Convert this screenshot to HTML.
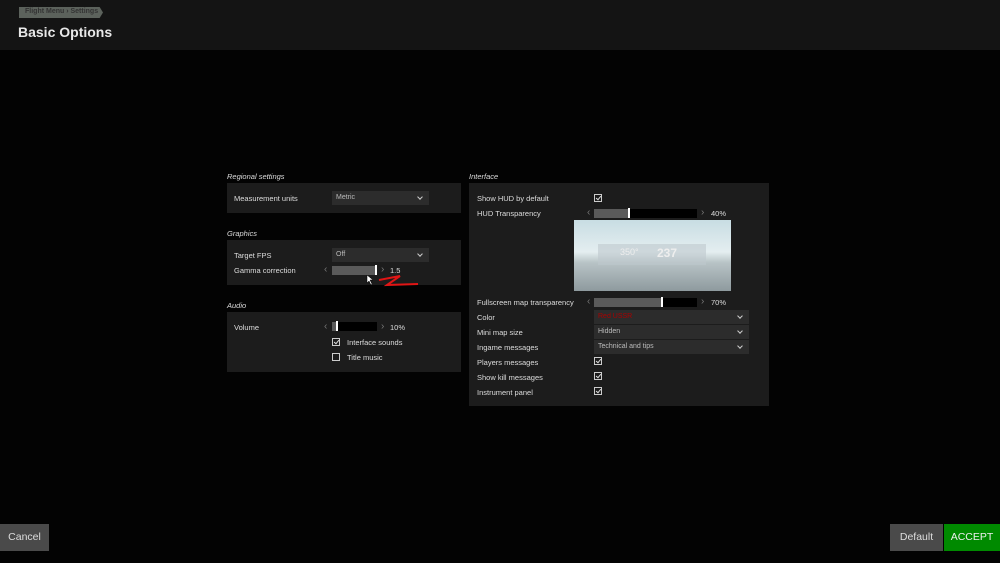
<!DOCTYPE html>
<html><head><style>
*{margin:0;padding:0;box-sizing:border-box}
body{width:1000px;height:563px;background:#030303;font-family:"Liberation Sans",sans-serif;color:#ddd;position:relative;overflow:hidden;font-size:7.5px}
.a{position:absolute}
.hdr{left:0;top:0;width:1000px;height:50px;background:#141414}
.lbl{font-style:italic;font-size:7.5px;color:#ddd}
.pan{background:#1c1c1c}
.t{font-size:7.5px;color:#ddd}
.dd{background:#2c2c2c;height:14px;padding:3px 0 0 4px;font-size:7px;color:#bbb;line-height:8px}
.dd:after{content:"";position:absolute;right:7px;top:4px;width:3px;height:3px;border-right:1px solid #ccc;border-bottom:1px solid #ccc;transform:rotate(45deg)}
.cb{width:8px;height:8px;border:1px solid #ccc}
.cb.c:after{content:"";position:absolute;left:2px;top:0px;width:2px;height:4px;border-right:1px solid #ddd;border-bottom:1px solid #ddd;transform:rotate(40deg)}
.sl{height:9px;background:#000}
.sf{height:9px;background:#5a5a5a}
.kn{width:2px;height:10px;background:#fff}
.ar{color:#777;font-size:10px;line-height:10px}
.btn{height:27px;line-height:27px;text-align:center;font-size:10.5px;color:#ddd}
</style></head><body>
<div class="a hdr"></div>
<div class="a" style="left:19px;top:7px;width:84px;height:11px;background:#5c625c;clip-path:polygon(0 0,96% 0,100% 50%,96% 100%,0 100%)"></div>
<div class="a" style="left:25px;top:8px;font-size:7px;color:#333;font-weight:bold">Flight Menu › Settings</div>
<div class="a" style="left:18px;top:24px;font-size:14px;font-weight:bold;color:#e8e8e8">Basic Options</div>

<div class="a lbl" style="left:227px;top:172px">Regional settings</div>
<div class="a pan" style="left:227px;top:183px;width:234px;height:30px"></div>
<div class="a t" style="left:234px;top:194px">Measurement units</div>
<div class="a dd" style="left:332px;top:191px;width:97px">Metric</div>

<div class="a lbl" style="left:227px;top:229px">Graphics</div>
<div class="a pan" style="left:227px;top:240px;width:234px;height:45px"></div>
<div class="a t" style="left:234px;top:251px">Target FPS</div>
<div class="a dd" style="left:332px;top:248px;width:97px">Off</div>
<div class="a t" style="left:234px;top:266px">Gamma correction</div>
<div class="a ar" style="left:324px;top:265px">‹</div>
<div class="a sf" style="left:332px;top:266px;width:44px"></div>
<div class="a kn" style="left:375px;top:265px"></div>
<div class="a ar" style="left:381px;top:265px">›</div>
<div class="a t" style="left:390px;top:266px">1.5</div>
<svg class="a" style="left:375px;top:270px" width="70" height="20"><path d="M4 10 L25 6 L12 15 L43 14" stroke="#e01515" stroke-width="2" fill="none"/></svg>
<svg class="a" style="left:366px;top:274px" width="8" height="12"><path d="M1 1 L1 9 L3 7 L5 11 L6 10 L4 6 L7 6 Z" fill="#fff" stroke="#000" stroke-width=".5"/></svg>

<div class="a lbl" style="left:227px;top:301px">Audio</div>
<div class="a pan" style="left:227px;top:312px;width:234px;height:60px"></div>
<div class="a t" style="left:234px;top:323px">Volume</div>
<div class="a ar" style="left:324px;top:322px">‹</div>
<div class="a sl" style="left:332px;top:322px;width:45px"></div>
<div class="a sf" style="left:332px;top:322px;width:4px"></div>
<div class="a kn" style="left:336px;top:321px"></div>
<div class="a ar" style="left:381px;top:322px">›</div>
<div class="a t" style="left:390px;top:323px">10%</div>
<div class="a cb c" style="left:332px;top:338px"></div>
<div class="a t" style="left:347px;top:338px">Interface sounds</div>
<div class="a cb" style="left:332px;top:353px"></div>
<div class="a t" style="left:347px;top:353px">Title music</div>

<div class="a lbl" style="left:469px;top:172px">Interface</div>
<div class="a pan" style="left:469px;top:183px;width:300px;height:223px"></div>
<div class="a t" style="left:477px;top:194px">Show HUD by default</div>
<div class="a cb c" style="left:594px;top:194px"></div>
<div class="a t" style="left:477px;top:209px">HUD Transparency</div>
<div class="a ar" style="left:587px;top:208px">‹</div>
<div class="a sl" style="left:594px;top:209px;width:103px"></div>
<div class="a sf" style="left:594px;top:209px;width:34px"></div>
<div class="a kn" style="left:628px;top:208px"></div>
<div class="a ar" style="left:701px;top:208px">›</div>
<div class="a t" style="left:711px;top:209px">40%</div>
<div class="a" style="left:574px;top:220px;width:157px;height:71px;background:linear-gradient(#c8dde3 0%,#e4eef0 45%,#b8c3c6 60%,#8e9a9e 100%)"></div>
<div class="a" style="left:598px;top:244px;width:108px;height:21px;background:rgba(190,200,205,.6)"></div>
<div class="a" style="left:620px;top:247px;font-size:9px;color:#eee">350°</div>
<div class="a" style="left:657px;top:246px;font-size:12px;color:#eee;font-weight:bold">237</div>
<div class="a t" style="left:477px;top:298px">Fullscreen map transparency</div>
<div class="a ar" style="left:587px;top:297px">‹</div>
<div class="a sl" style="left:594px;top:298px;width:103px"></div>
<div class="a sf" style="left:594px;top:298px;width:68px"></div>
<div class="a kn" style="left:661px;top:297px"></div>
<div class="a ar" style="left:701px;top:297px">›</div>
<div class="a t" style="left:711px;top:298px">70%</div>
<div class="a t" style="left:477px;top:313px">Color</div>
<div class="a dd" style="left:594px;top:310px;width:155px;color:#a00">Red USSR</div>
<div class="a t" style="left:477px;top:328px">Mini map size</div>
<div class="a dd" style="left:594px;top:325px;width:155px">Hidden</div>
<div class="a t" style="left:477px;top:343px">Ingame messages</div>
<div class="a dd" style="left:594px;top:340px;width:155px">Technical and tips</div>
<div class="a t" style="left:477px;top:358px">Players messages</div>
<div class="a cb c" style="left:594px;top:357px"></div>
<div class="a t" style="left:477px;top:373px">Show kill messages</div>
<div class="a cb c" style="left:594px;top:372px"></div>
<div class="a t" style="left:477px;top:388px">Instrument panel</div>
<div class="a cb c" style="left:594px;top:387px"></div>

<div class="a btn" style="left:0;top:524px;width:49px;background:#4a4a4a">Cancel</div>
<div class="a btn" style="left:890px;top:524px;width:53px;background:#4a4a4a">Default</div>
<div class="a btn" style="left:944px;top:524px;width:56px;background:#008a00;color:#eee">ACCEPT</div>
</body></html>
